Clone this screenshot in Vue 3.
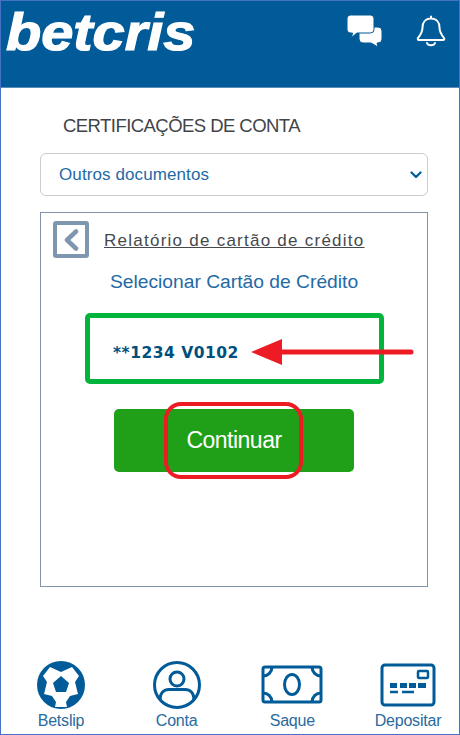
<script setup>
const navItems = [
  { key: 'ball', label: 'Betslip' },
  { key: 'user', label: 'Conta' },
  { key: 'cash', label: 'Saque' },
  { key: 'card', label: 'Depositar' }
]
</script>

<template>
  <div class="frame">
    <header class="top">
      <div class="logo">betcris</div>
      <div class="top-icons">
        <svg class="chat" width="38" height="34" viewBox="0 0 38 34">
          <path d="M13 13h19a4 4 0 0 1 4 4v8a4 4 0 0 1-4 4h-1l1 4-7-4H17a4 4 0 0 1-4-4z" fill="#fff" stroke="#005b98" stroke-width="1"/>
          <path d="M4.500 1h20a3.500 3.500 0 0 1 3.500 3.500v11a3.500 3.500 0 0 1-3.500 3.500H11l-5.500 4.500 1-4.500h-2A3.500 3.500 0 0 1 1 15.500v-11A3.500 3.500 0 0 1 4.500 1z" fill="#fff" stroke="#005b98" stroke-width="1"/>
        </svg>
        <svg class="bell" width="30" height="32" viewBox="0 0 30 32" fill="none" stroke="#fff" stroke-width="2" stroke-linecap="round" stroke-linejoin="round">
          <path d="M15 1.500v2M15 3.500c-5.500 0-8.500 4-8.500 9 0 5-2 7.500-4.500 10.500-.8 1 0 2 1 2h24c1 0 1.800-1 1-2-2.500-3-4.500-5.500-4.500-10.500 0-5-3-9-8.500-9z"/>
          <path d="M11 28c1 3 7 3 8 0"/>
        </svg>
      </div>
    </header>

    <main class="content">
      <h1 class="title">CERTIFICAÇÕES DE CONTA</h1>
      <div class="select">
        <span>Outros documentos</span>
        <svg width="12" height="8" viewBox="0 0 12 8" fill="none" stroke="#005b98" stroke-width="2.200" stroke-linecap="round" stroke-linejoin="round">
          <path d="M1.500 1.500 6 6l4.500-4.500"/>
        </svg>
      </div>

      <section class="panel">
        <div class="panel-head">
          <span class="back">
            <svg width="16" height="22" viewBox="0 0 16 22" fill="none" stroke="#7f97ae" stroke-width="4.500" stroke-linecap="round" stroke-linejoin="round">
              <path d="M13 2.500 4 11l9 8.500"/>
            </svg>
          </span>
          <a class="report">Relatório de cartão de crédito</a>
        </div>
        <h2 class="subtitle">Selecionar Cartão de Crédito</h2>

        <div class="card-box">
          <span class="card-num">**1234 V0102</span>
        </div>

        <div class="btn-wrap">
          <button class="btn">Continuar</button>
          <span class="btn-mark"></span>
        </div>

        <svg class="arrow" width="170" height="32" viewBox="0 0 170 32">
          <path d="M31 16H161" stroke="#ed1c24" stroke-width="5" stroke-linecap="round"/>
          <path d="M1 16 32 3v26z" fill="#ed1c24"/>
        </svg>
      </section>
    </main>

    <nav class="nav">
      <div v-for="item in navItems" :key="item.key" class="nav-item">
        <div class="nav-icon">
          <svg v-if="item.key === 'ball'" width="48" height="48" viewBox="0 0 48 48">
            <circle cx="24" cy="24" r="24" fill="#005b98"/>
            <path d="M13 6 24 11 35 6 42 15 38 21 41 33 33 35 29 41 30 46H18L19 41 15 35 7 33 10 21 6 15z" fill="#fff"/>
            <path d="M24 15 32 22 29 31H19L16 22z" fill="#005b98"/>
          </svg>
          <svg v-else-if="item.key === 'user'" width="48" height="48" viewBox="0 0 48 48" fill="none" stroke="#005b98" stroke-width="3">
            <circle cx="24" cy="24" r="22.500"/>
            <circle cx="24" cy="18" r="7"/>
            <path d="M7 39c0-7 4-10.500 9-10.500h16c5 0 9 3.500 9 10.500"/>
          </svg>
          <svg v-else-if="item.key === 'cash'" width="62" height="40" viewBox="0 0 62 40" fill="none" stroke="#005b98" stroke-width="3">
            <rect x="2" y="2" width="58" height="35" rx="2"/>
            <ellipse cx="31" cy="19.500" rx="7.500" ry="10"/>
            <path d="M11 2a9 9 0 0 1-9 9M51 2a9 9 0 0 0 9 9M2 28a9 9 0 0 1 9 9M60 28a9 9 0 0 0-9 9"/>
          </svg>
          <svg v-else width="56" height="44" viewBox="0 0 56 44" fill="none" stroke="#005b98">
            <rect x="2" y="2" width="52" height="40" rx="3" stroke-width="3"/>
            <rect x="38" y="8" width="10" height="7" rx="1" stroke-width="2.500"/>
            <path d="M10 20h7v5h-7zM20 20h7v5h-7zM29 20h7v5h-7zM38 20h8v5h-8z" fill="#005b98" stroke="none"/>
            <path d="M10 29h8M22 29h12" stroke-width="2.500"/>
          </svg>
        </div>
        <span class="nav-label">{{ item.label }}</span>
      </div>
    </nav>
  </div>
</template>

<style>
html, body { margin: 0; background: #fff; }
</style>

<style scoped>
* { box-sizing: border-box; }
.frame {
  width: 460px;
  height: 735px;
  border: 1px solid #4472c4;
  display: flex;
  flex-direction: column;
  font-family: "Liberation Sans", Arial, sans-serif;
  overflow: hidden;
  background: #fff;
}
.top {
  height: 87px;
  flex: none;
  background: #005b98;
  border-bottom: 1px solid #5b8db8;
  display: flex;
  justify-content: space-between;
  align-items: flex-start;
  padding: 0 13px 0 5px;
}
.logo {
  font-size: 52px;
  line-height: 62px;
  font-weight: 700;
  font-style: italic;
  color: #fff;
  -webkit-text-stroke: 1.200px #fff;
  transform: scaleX(1.11);
  transform-origin: left center;
}
.top-icons {
  display: flex;
  gap: 32px;
  padding-top: 13px;
}
.bell { margin-top: 1px; }
.content {
  flex: 1;
  padding: 0 31px 0 39px;
}
.title {
  margin: 27px 0 0 23px;
  font-size: 18.500px;
  line-height: 22px;
  font-weight: 400;
  letter-spacing: -0.550px;
  color: #3f4448;
}
.select {
  margin-top: 16px;
  height: 43px;
  border: 1px solid #ccc;
  border-radius: 6px;
  display: flex;
  align-items: center;
  justify-content: space-between;
  padding: 0 5px 0 18px;
  font-size: 17px;
  letter-spacing: 0.100px;
  color: #1f6aa5;
}
.panel {
  position: relative;
  margin-top: 16px;
  height: 375px;
  border: 1px solid #7f93ab;
}
.panel-head {
  display: flex;
  align-items: flex-start;
  padding: 8px 0 0 12px;
}
.back {
  width: 36px;
  height: 37px;
  border: 4px solid #7f97ae;
  border-radius: 3px;
  display: flex;
  align-items: center;
  justify-content: center;
}
.report {
  margin: 10px 0 0 15px;
  font-size: 17px;
  line-height: 20px;
  letter-spacing: 1.250px;
  color: #45494d;
  text-decoration: underline;
}
.subtitle {
  margin: 13px 0 0;
  font-size: 19.250px;
  line-height: 22px;
  font-weight: 400;
  color: #1f6aa5;
  text-align: center;
}
.card-box {
  margin: 20px 0 0 44px;
  width: 299px;
  height: 71px;
  border: 5px solid #00b43c;
  border-radius: 5px;
  display: flex;
  align-items: center;
  padding: 8px 0 0 23px;
}
.card-num {
  font-family: "DejaVu Sans", sans-serif;
  font-size: 15.500px;
  font-weight: 700;
  letter-spacing: 0.500px;
  color: #004f7c;
}
.btn-wrap {
  position: relative;
  margin: 25px 0 0 73px;
  width: 240px;
  height: 63px;
}
.btn {
  display: block;
  width: 100%;
  height: 100%;
  border: 0;
  border-radius: 5px;
  background: #1fa018;
  color: #fff;
  font-family: inherit;
  font-size: 23px;
  letter-spacing: -0.500px;
  padding: 0;
}
.btn-mark {
  position: absolute;
  left: 50px;
  top: -7px;
  width: 139px;
  height: 77px;
  border: 4px solid #ed1c24;
  border-radius: 17px;
}
.arrow {
  position: absolute;
  left: 209px;
  top: 123px;
}
.nav {
  flex: none;
  height: 74px;
  display: flex;
  justify-content: space-between;
  padding: 0 1px 0 10px;
}
.nav-item {
  width: 100px;
  display: flex;
  flex-direction: column;
  align-items: center;
}
.nav-icon {
  height: 50px;
  display: flex;
  align-items: center;
  justify-content: center;
}
.nav-label {
  margin-top: 2px;
  font-size: 16px;
  line-height: 18px;
  letter-spacing: -0.200px;
  color: #2a6aa0;
}
</style>
